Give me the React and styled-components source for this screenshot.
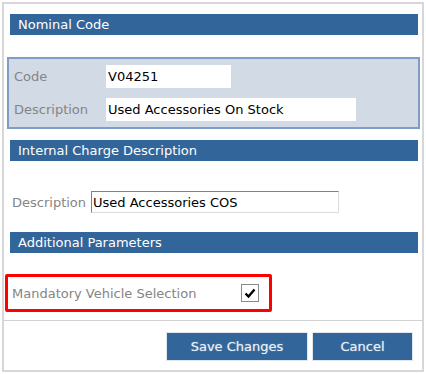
import React from "react";
import styled, { createGlobalStyle } from "styled-components";

const Global = createGlobalStyle`
  html, body {
    margin: 0;
    padding: 0;
    background: #ffffff;
    font-family: "DejaVu Sans", Verdana, sans-serif;
  }
`;

const App = () => {
  return (
    <>
      <Global />
      <Dialog>
        <Body>
          <Header>Nominal Code</Header>
          <Fieldset>
            <Row>
              <Label $width="92px">Code</Label>
              <Field $width="125px" $flat>V04251</Field>
            </Row>
            <Row>
              <Label $width="92px">Description</Label>
              <Field $width="250px" $flat>Used Accessories On Stock</Field>
            </Row>
          </Fieldset>
          <Header $top="11px">Internal Charge Description</Header>
          <PlainRow>
            <Label $width="79px">Description</Label>
            <Field $width="248px">Used Accessories COS</Field>
          </PlainRow>
          <Header $top="19px">Additional Parameters</Header>
          <Highlight>
            <Label $width="229px">Mandatory Vehicle Selection</Label>
            <Check>
              <svg width="12" height="11" viewBox="0 0 12 11">
                <path d="M1.5 5.5 L4.5 8.5 L10.5 1.5" fill="none" stroke="#000" strokeWidth="2.4" />
              </svg>
            </Check>
          </Highlight>
        </Body>
        <Footer>
          <Button $width="142px">Save Changes</Button>
          <Button $width="101px">Cancel</Button>
        </Footer>
      </Dialog>
    </>
  );
};

export default App;

const Dialog = styled.div`
  margin: 2px;
  width: 418px;
  height: 366px;
  border: 2px solid #d7d7d7;
  display: flex;
  flex-direction: column;
`;

const Body = styled.div`
  padding: 10px 2px 0 3px;
  display: flex;
  flex-direction: column;
  flex: 1;
`;

const Header = styled.div`
  margin: ${(p) => p.$top || "0"} 2px 0 3px;
  height: 21px;
  background: #32669a;
  color: #ffffff;
  font-size: 13px;
  line-height: 21px;
  padding-left: 8px;
  white-space: nowrap;
`;

const Fieldset = styled.div`
  margin-top: 22px;
  height: 56px;
  background: #d1dae5;
  border: 2px solid #7e9ec6;
  padding: 6px 0 6px 5px;
  display: flex;
  flex-direction: column;
  gap: 10px;
  box-sizing: content-box;
`;

const Row = styled.div`
  display: flex;
  align-items: center;
  height: 23px;
`;

const PlainRow = styled.div`
  display: flex;
  align-items: center;
  height: 22px;
  margin-top: 30px;
  padding-left: 5px;
`;

const Label = styled.div`
  width: ${(p) => p.$width};
  color: #858585;
  font-size: 13px;
  white-space: nowrap;
`;

const Field = styled.div`
  width: ${(p) => p.$width};
  height: 100%;
  box-sizing: border-box;
  background: #ffffff;
  color: #000000;
  font-size: 13px;
  display: flex;
  align-items: center;
  padding-left: ${(p) => (p.$flat ? "2px" : "1px")};
  white-space: nowrap;
  border: ${(p) => (p.$flat ? "none" : "1px solid #dcdcdc")};
  border-top-color: ${(p) => (p.$flat ? "transparent" : "#808080")};
  border-left-color: ${(p) => (p.$flat ? "transparent" : "#808080")};
`;

const Highlight = styled.div`
  margin: 21px 0 0 -2px;
  width: 267px;
  height: 38px;
  box-sizing: border-box;
  border: 3px solid #ff0000;
  border-radius: 2px;
  display: flex;
  align-items: center;
  padding-left: 4px;
`;

const Check = styled.div`
  width: 18px;
  height: 18px;
  box-sizing: border-box;
  border: 1px solid #8a8a8a;
  background: #ffffff;
  display: flex;
  align-items: center;
  justify-content: center;
`;

const Footer = styled.div`
  border-top: 1px solid #d2d2d2;
  height: 50px;
  box-sizing: border-box;
  display: flex;
  justify-content: flex-end;
  align-items: flex-start;
  gap: 4px;
  padding: 11px 9px 0 0;
`;

const Button = styled.div`
  width: ${(p) => p.$width};
  height: 29px;
  box-sizing: border-box;
  background: #32669a;
  border: 1px solid #dfe7ef;
  color: #e8eef5;
  font-family: "DejaVu Sans", Verdana, sans-serif;
  font-size: 13px;
  display: flex;
  align-items: center;
  justify-content: center;
  text-shadow: 0 0 1px #a8c0d8;
`;
